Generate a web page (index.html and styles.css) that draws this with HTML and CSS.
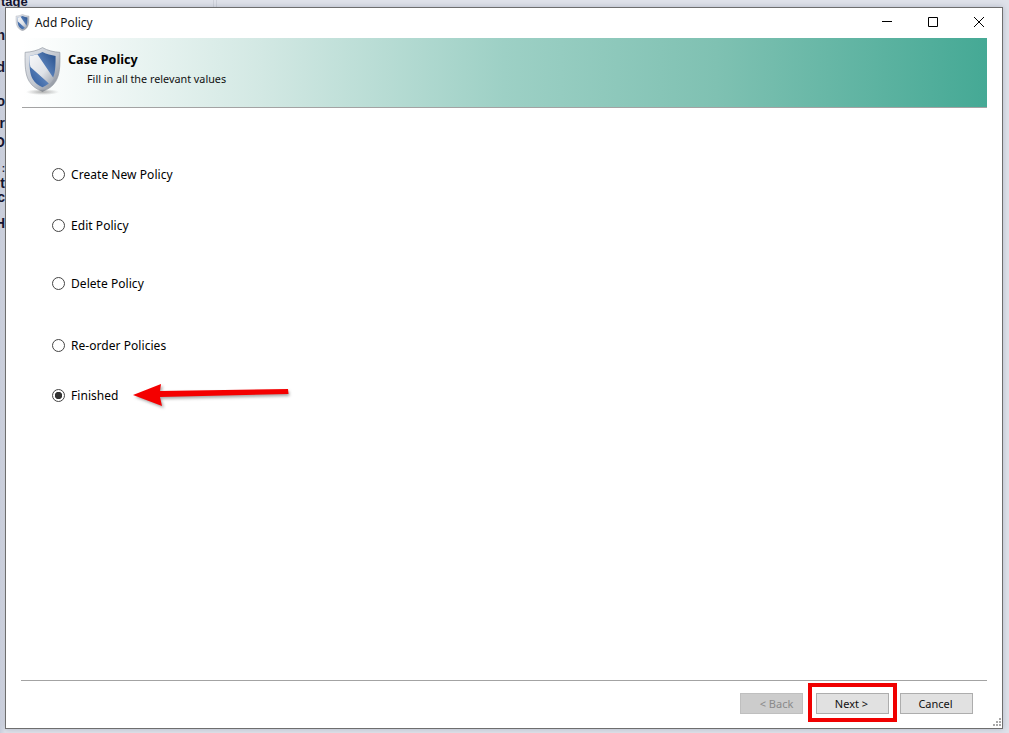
FILE: index.html
```html
<!DOCTYPE html>
<html lang="en">
<head>
<meta charset="utf-8">
<title>Add Policy</title>
<link rel="stylesheet" href="styles.css">
</head>
<body>
<svg class="defs" width="0" height="0" aria-hidden="true">
  <defs>
    <linearGradient id="rim" x1="0" y1="0" x2="1" y2="1">
      <stop offset="0" stop-color="#e4e7ec"/><stop offset=".55" stop-color="#c2c7cf"/><stop offset="1" stop-color="#7d838e"/>
    </linearGradient>
    <linearGradient id="blue" x1="1" y1="0" x2="0" y2="1">
      <stop offset="0" stop-color="#234c88"/><stop offset=".5" stop-color="#6188c0"/><stop offset="1" stop-color="#2a5596"/>
    </linearGradient>
    <linearGradient id="band" x1="0" y1="0" x2="1" y2="1">
      <stop offset="0" stop-color="#f6f7f9"/><stop offset=".6" stop-color="#dfe2e7"/><stop offset="1" stop-color="#9ea4ae"/>
    </linearGradient>
    <symbol id="shield" viewBox="0 0 36 44">
      <path fill="url(#rim)" stroke="#8d939d" stroke-width=".6" d="M18 .6C13 3.400 7 5 1 5.200c-.3 14 .2 22 4 28.400C8 38.500 12.500 41.500 18 43.400c5.500-1.900 10-4.900 13-9.800 3.800-6.400 4.300-14.400 4-28.400C29 5 23 3.400 18 .6z"/>
      <path fill="url(#blue)" d="M18 5C14 7 9.500 8.300 5.200 8.800c0 10.500.3 17.600 3.200 22.600 2.200 3.800 5.600 6.300 9.600 8 4-1.700 7.400-4.200 9.600-8 2.900-5 3.200-12.100 3.200-22.600C26.500 8.300 22 7 18 5z"/>
      <path fill="url(#band)" d="M5.200 8.800C8 8.400 10.500 7.800 13 7l16 23.800c-1 2.200-2.400 4-4.200 5.400L6.200 19.500c-.7-3-1-6.400-1-10.700z"/>
    </symbol>
  </defs>
</svg>

<div class="backdrop" aria-hidden="true">
  <span class="frag frag-title">tage</span>
  <span class="frag f1">n</span>
  <span class="frag f2">d</span>
  <span class="frag f3">o</span>
  <span class="frag f4">r</span>
  <span class="frag f5">O</span>
  <span class="frag f9">:</span>
  <span class="frag f6">t</span>
  <span class="frag f7">c</span>
  <span class="frag f8">H</span>
  <i class="rule r1"></i>
  <i class="rule r2"></i>
</div>

<main class="window">
  <header class="titlebar">
    <svg class="title-icon"><use href="#shield"/></svg>
    <span class="title-text">Add Policy</span>
    <div class="controls">
      <div class="ctl-cell"><svg class="ctl" viewBox="0 0 12 12"><path d="M1 5.500h10" stroke="#000" fill="none"/></svg></div>
      <div class="ctl-cell"><svg class="ctl" viewBox="0 0 12 12"><path d="M1.500 1.500h9v9h-9z" stroke="#000" fill="none"/></svg></div>
      <div class="ctl-cell"><svg class="ctl" viewBox="0 0 12 12"><path d="M1 1l10 10M11 1L1 11" stroke="#000" fill="none"/></svg></div>
    </div>
  </header>

  <section class="banner">
    <div class="banner-mark">
      <svg class="banner-icon"><use href="#shield"/></svg>
      <i class="banner-drop"></i>
    </div>
    <div class="banner-text">
      <h1>Case Policy</h1>
      <p>Fill in all the relevant values</p>
    </div>
  </section>

  <form class="options">
    <label class="opt opt-1"><input type="radio" name="a"><span>Create New Policy</span></label>
    <label class="opt opt-2"><input type="radio" name="a"><span>Edit Policy</span></label>
    <label class="opt opt-3"><input type="radio" name="a"><span>Delete Policy</span></label>
    <label class="opt opt-4"><input type="radio" name="a"><span>Re-order Policies</span></label>
    <label class="opt opt-5"><input type="radio" name="a" checked><span>Finished</span></label>
  </form>

  <footer class="footer">
    <div class="buttons">
      <button class="btn btn-back" disabled>&lt; Back</button>
      <button class="btn btn-next">Next &gt;</button>
      <button class="btn btn-cancel">Cancel</button>
    </div>
  </footer>

  <svg class="arrow" viewBox="0 0 170 30" aria-hidden="true">
    <path class="arrow-shadow" d="M3 14L31 3l-2 7 128-2 .5 5L29 16l3 9z"/>
    <path class="arrow-fill" d="M1 12L29 1l-1 7 128-2 .5 5L28 14l2 9z"/>
  </svg>
  <div class="highlight" aria-hidden="true"></div>
  <svg class="grip" viewBox="0 0 10 10" aria-hidden="true">
    <path fill="#a8a8a8" d="M7 0h2v2H7zM4 3h2v2H4zM7 3h2v2H7zM1 6h2v2H1zM4 6h2v2H4zM7 6h2v2H7z"/>
  </svg>
</main>
</body>
</html>
```

FILE: styles.css
```css
* { box-sizing: border-box; }
html, body { height: 100%; }
body {
  margin: 0;
  padding: 7px 6px 4px 5px;
  overflow: hidden;
  display: flex;
  background: #dfe2ea;
  font: 12px/16px "Noto Sans", "Liberation Sans", sans-serif;
  color: #000;
}
.defs { position: absolute; }

.backdrop { position: absolute; inset: 0; overflow: hidden; background: linear-gradient(90deg, #c9cfdd 0, #dfe2ea 5px); }
.frag { position: absolute; left: -7px; width: 12px; font: bold 14px/14px "Liberation Sans", sans-serif; color: #10102c; text-align: right; }
.frag-title { left: 1px; top: -5px; width: auto; font-size: 13px; text-align: left; }
.f1 { top: 28px; } .f2 { top: 60px; } .f3 { top: 94px; } .f4 { top: 116px; }
.f5 { top: 135px; } .f9 { top: 164px; font-size: 10px; line-height: 10px; } .f6 { top: 176px; } .f7 { top: 190px; } .f8 { top: 216px; }
.rule { position: absolute; top: 0; width: 1px; height: 7px; background: #ced1da; }
.r1 { left: 213px; } .r2 { left: 216px; }

.window {
  position: relative;
  flex: 1;
  display: flex;
  flex-direction: column;
  background: #fff;
  border: 1px solid #6e6e6e;
  box-shadow: 0 0 6px rgba(90, 100, 130, .35);
  color: #000;
}

.titlebar { height: 30px; flex: none; display: flex; align-items: center; padding: 0 0 0 9px; }
.title-icon { width: 15px; height: 17px; margin: 0 5px 2px 0; }
.title-text { font-size: 11.900px; color: #111; margin-bottom: 2px; }
.controls { margin-left: auto; display: flex; height: 100%; }
.ctl-cell { width: 46px; display: flex; align-items: center; justify-content: center; padding-bottom: 2px; }
.ctl { width: 12px; height: 12px; }

.banner {
  flex: none;
  height: 70px;
  margin: 0 15px 0 16px;
  display: flex;
  background: linear-gradient(90deg, #fff 0, #d2e8e3 25%, #9dd0c5 50%, #7fc1b2 72%, #45a995 100%);
  border-bottom: 1px solid #a3a3a3;
}
.banner-mark { position: relative; width: 37px; height: 46px; margin: 9px 0 0 2px; flex: none; }
.banner-icon { display: block; width: 37px; height: 45px; position: relative; }
.banner-drop { position: absolute; left: 2px; right: 2px; bottom: -2px; height: 6px; background: radial-gradient(closest-side, rgba(80,80,80,.45), rgba(80,80,80,0)); }
.banner-text { margin-left: 7px; padding-top: 14px; }
.banner-text h1 { margin: 0; font-size: 12.600px; line-height: 16px; font-weight: 700; }
.banner-text p { margin: 3px 0 0 19px; font-size: 10.800px; line-height: 16px; color: #111; }

.options { flex: 1; display: flex; flex-direction: column; padding-left: 46px; letter-spacing: .05px; }
.opt { display: flex; align-items: center; height: 16px; }
.opt input { appearance: none; width: 13px; height: 13px; margin: -2px 6px 0 0; border: 1px solid #444; border-radius: 50%; background: #fff; flex: none; }
.opt input:checked { background: radial-gradient(circle, #333 0 3.400px, #fff 4px); }
.opt-1 { margin-top: 59px; }
.opt-2 { margin-top: 35px; }
.opt-3 { margin-top: 42px; }
.opt-4 { margin-top: 46px; }
.opt-5 { margin-top: 34px; }

.footer { flex: none; height: 48px; margin: 0 15px 0 15px; border-top: 1px solid #a3a3a3; padding-top: 12px; }
.buttons { display: flex; justify-content: flex-end; padding-right: 14px; }
.btn { height: 21px; padding: 0 2px 0 0; font: inherit; font-size: 11px; background: #e1e1e1; border: 1px solid #adadad; color: #111; }
.btn-back { width: 63px; padding: 0 0 0 10px; background: #cccccc; color: #8a8a8a; border-color: #bfbfbf; }
.btn-next { width: 73px; margin-left: 13px; }
.btn-cancel { width: 73px; margin-left: 11px; }

.arrow { position: absolute; left: 126px; top: 375px; width: 170px; height: 30px; overflow: visible; }
.arrow-fill { fill: #f40000; }
.arrow-shadow { fill: rgba(60, 60, 60, .45); filter: blur(1.500px); }
.highlight { position: absolute; left: 802px; top: 675px; width: 89px; height: 39px; border: 4px solid #f00000; }
.grip { position: absolute; right: 0; bottom: 0; width: 10px; height: 10px; }
```
